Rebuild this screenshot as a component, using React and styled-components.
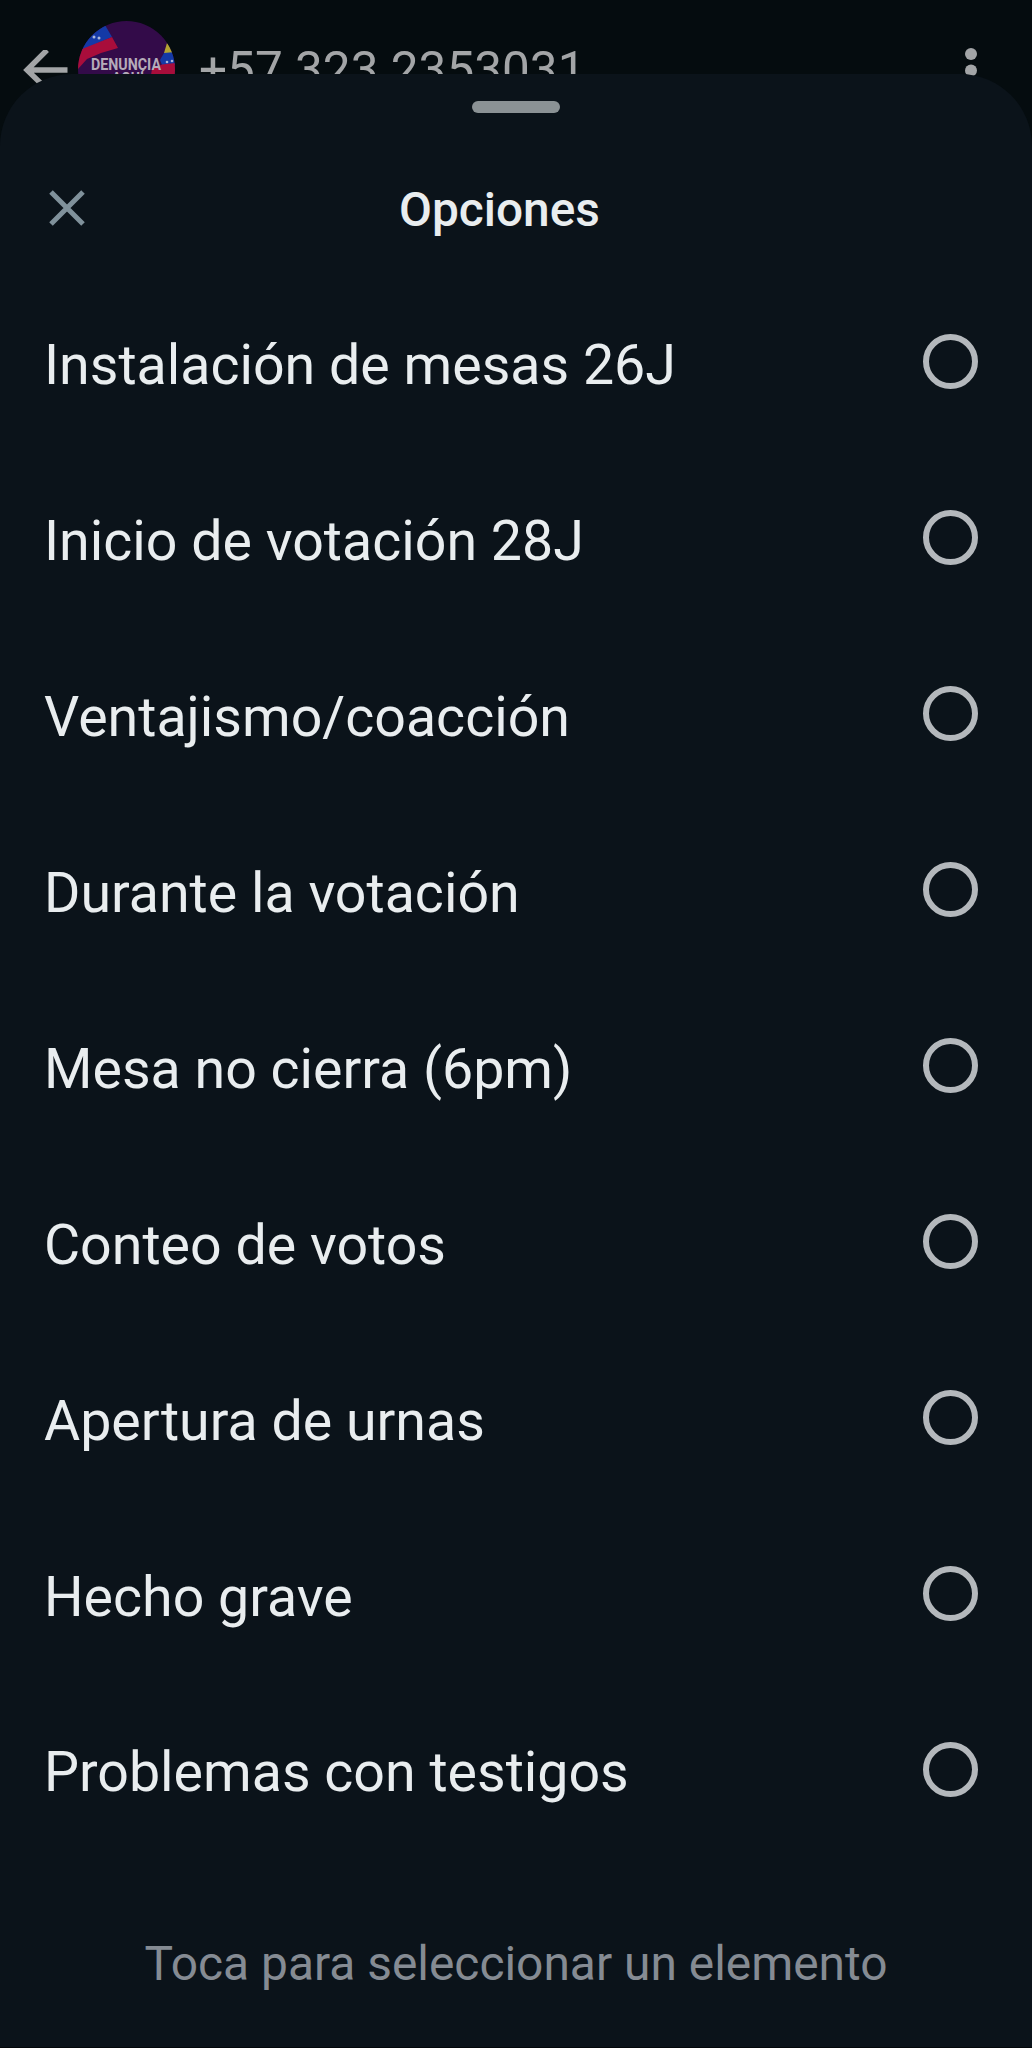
import React, { useState } from "react";
import styled, { createGlobalStyle } from "styled-components";

const GlobalStyle = createGlobalStyle`
  html, body { margin: 0; padding: 0; background: #050c0f; }
  body { font-family: Roboto, "Noto Sans", sans-serif; }
  *, *::before, *::after { box-sizing: border-box; }
`;

const Screen = styled.main`
  display: flex;
  flex-direction: column;
  width: 1032px;
  height: 2048px;
  overflow: hidden;
  background: #050c0f;
`;

const ChatHeader = styled.header`
  display: flex;
  flex: none;
  align-items: center;
  height: 139px;
  padding: 0 52px 0 23px;
`;

const BackIcon = styled.svg`
  flex: none;
  width: 46px;
  height: 40px;
  margin-right: 9px;
`;

const Avatar = styled.svg`
  flex: none;
  width: 97px;
  height: 97px;
`;

const Phone = styled.span`
  flex: 1;
  margin-left: 24px;
  font-size: 49.5px;
  line-height: 60px;
  white-space: nowrap;
  color: #a3a5a7;
`;

const MoreDots = styled.svg`
  flex: none;
  width: 18px;
  height: 46px;
`;

const Sheet = styled.section`
  position: relative;
  display: flex;
  flex: 1;
  flex-direction: column;
  margin-top: -65px;
  border-radius: 72px 72px 0 0;
  border-bottom: 1px solid #03070a;
  background: #0b131a;
`;

const Handle = styled.div`
  flex: none;
  align-self: center;
  width: 88px;
  height: 12px;
  margin-top: 27px;
  border-radius: 6px;
  background: #8b9295;
`;

const TitleBar = styled.div`
  display: grid;
  flex: none;
  grid-template-columns: 36px 1fr;
  align-items: center;
  height: 60px;
  margin-top: 66px;
  padding: 0 118px 0 49px;
`;

const CloseIcon = styled.svg`
  width: 36px;
  height: 36px;
  margin-top: -4px;
`;

const Title = styled.h1`
  margin: 1px 0 0;
  font-size: 47.8px;
  font-weight: 500;
  line-height: 60px;
  text-align: center;
  color: #e9edef;
`;

const OptionList = styled.ul`
  display: flex;
  flex: none;
  flex-direction: column;
  margin: 35px 0 0;
  padding: 0;
  list-style: none;
`;

const Option = styled.li`
  display: flex;
  align-items: center;
  justify-content: space-between;
  height: 175.95px;
  padding: 0 54.5px 0 44px;
  cursor: pointer;
`;

const Label = styled.span`
  margin-top: 8px;
  font-size: 55.5px;
  line-height: 66px;
  white-space: nowrap;
  color: #e9edef;
`;

const Radio = styled.span`
  flex: none;
  width: 55px;
  height: 55px;
  padding: 8px;
  border: 6px solid #b4b8bc;
  border-radius: 50%;
  background: ${(p) => (p.$on ? "#b4b8bc" : "transparent")};
  background-clip: content-box;
`;

const Hint = styled.p`
  margin: 77px 0 0;
  font-size: 47.9px;
  line-height: 60px;
  text-align: center;
  white-space: nowrap;
  color: #858b93;
`;

const options = [
  "Instalación de mesas 26J",
  "Inicio de votación 28J",
  "Ventajismo/coacción",
  "Durante la votación",
  "Mesa no cierra (6pm)",
  "Conteo de votos",
  "Apertura de urnas",
  "Hecho grave",
  "Problemas con testigos",
];

export default function App() {
  const [selected, setSelected] = useState(null);
  return (
    <Screen>
      <GlobalStyle />
      <ChatHeader>
        <BackIcon viewBox="0 0 46 40" fill="none" stroke="#a3a5a7" strokeWidth="5.4">
          <path d="M44.500 20H4M24 0L4 20L18 33.500" />
        </BackIcon>
        <Avatar viewBox="0 0 97 97">
          <defs>
            <clipPath id="disc"><circle cx="48.500" cy="48.500" r="48.500" /></clipPath>
          </defs>
          <g clipPath="url(#disc)">
            <rect width="97" height="97" fill="#330b49" />
            <path d="M0 22L27 4L34 16L4 29L0 32Z" fill="#1439a6" />
            <path d="M0 31L4 28L34 16L40 27L23 32L9 38L0 48Z" fill="#a80d3b" />
            <path d="M86 32L89 22L97 32Z" fill="#b5a332" />
            <path d="M82 39L86 32L97 31V44L84 44Z" fill="#1439a6" />
            <path d="M74 48L84 43.500L97 42V60H72Z" fill="#a80d3b" />
            <g fill="#a9b5d8">
              <circle cx="16" cy="16" r="1.500" /><circle cx="21" cy="17" r="1.500" />
              <circle cx="89" cy="41" r="1.300" /><circle cx="94" cy="40" r="1.300" />
            </g>
            <g fill="#b5abb9" fontFamily="Roboto, sans-serif" fontWeight="700">
              <text x="13" y="48.500" fontSize="17" textLength="70" lengthAdjust="spacingAndGlyphs">DENUNCIA</text>
              <text x="34" y="62" fontSize="15" textLength="32" lengthAdjust="spacingAndGlyphs">AQUÍ</text>
            </g>
          </g>
        </Avatar>
        <Phone>+57 323 2353031</Phone>
        <MoreDots viewBox="0 0 18 46" fill="#a3a5a7">
          <circle cx="9" cy="7" r="6" />
          <circle cx="9" cy="23.500" r="6" />
          <circle cx="9" cy="40" r="6" />
        </MoreDots>
      </ChatHeader>
      <Sheet>
        <Handle />
        <TitleBar>
          <CloseIcon viewBox="0 0 36 36" stroke="#80919b" strokeWidth="5">
            <path d="M2 2L34 34M34 2L2 34" />
          </CloseIcon>
          <Title>Opciones</Title>
        </TitleBar>
        <OptionList>
          {options.map((o) => (
            <Option key={o} onClick={() => setSelected(o)}>
              <Label>{o}</Label>
              <Radio $on={selected === o} />
            </Option>
          ))}
        </OptionList>
        <Hint>Toca para seleccionar un elemento</Hint>
      </Sheet>
    </Screen>
  );
}
